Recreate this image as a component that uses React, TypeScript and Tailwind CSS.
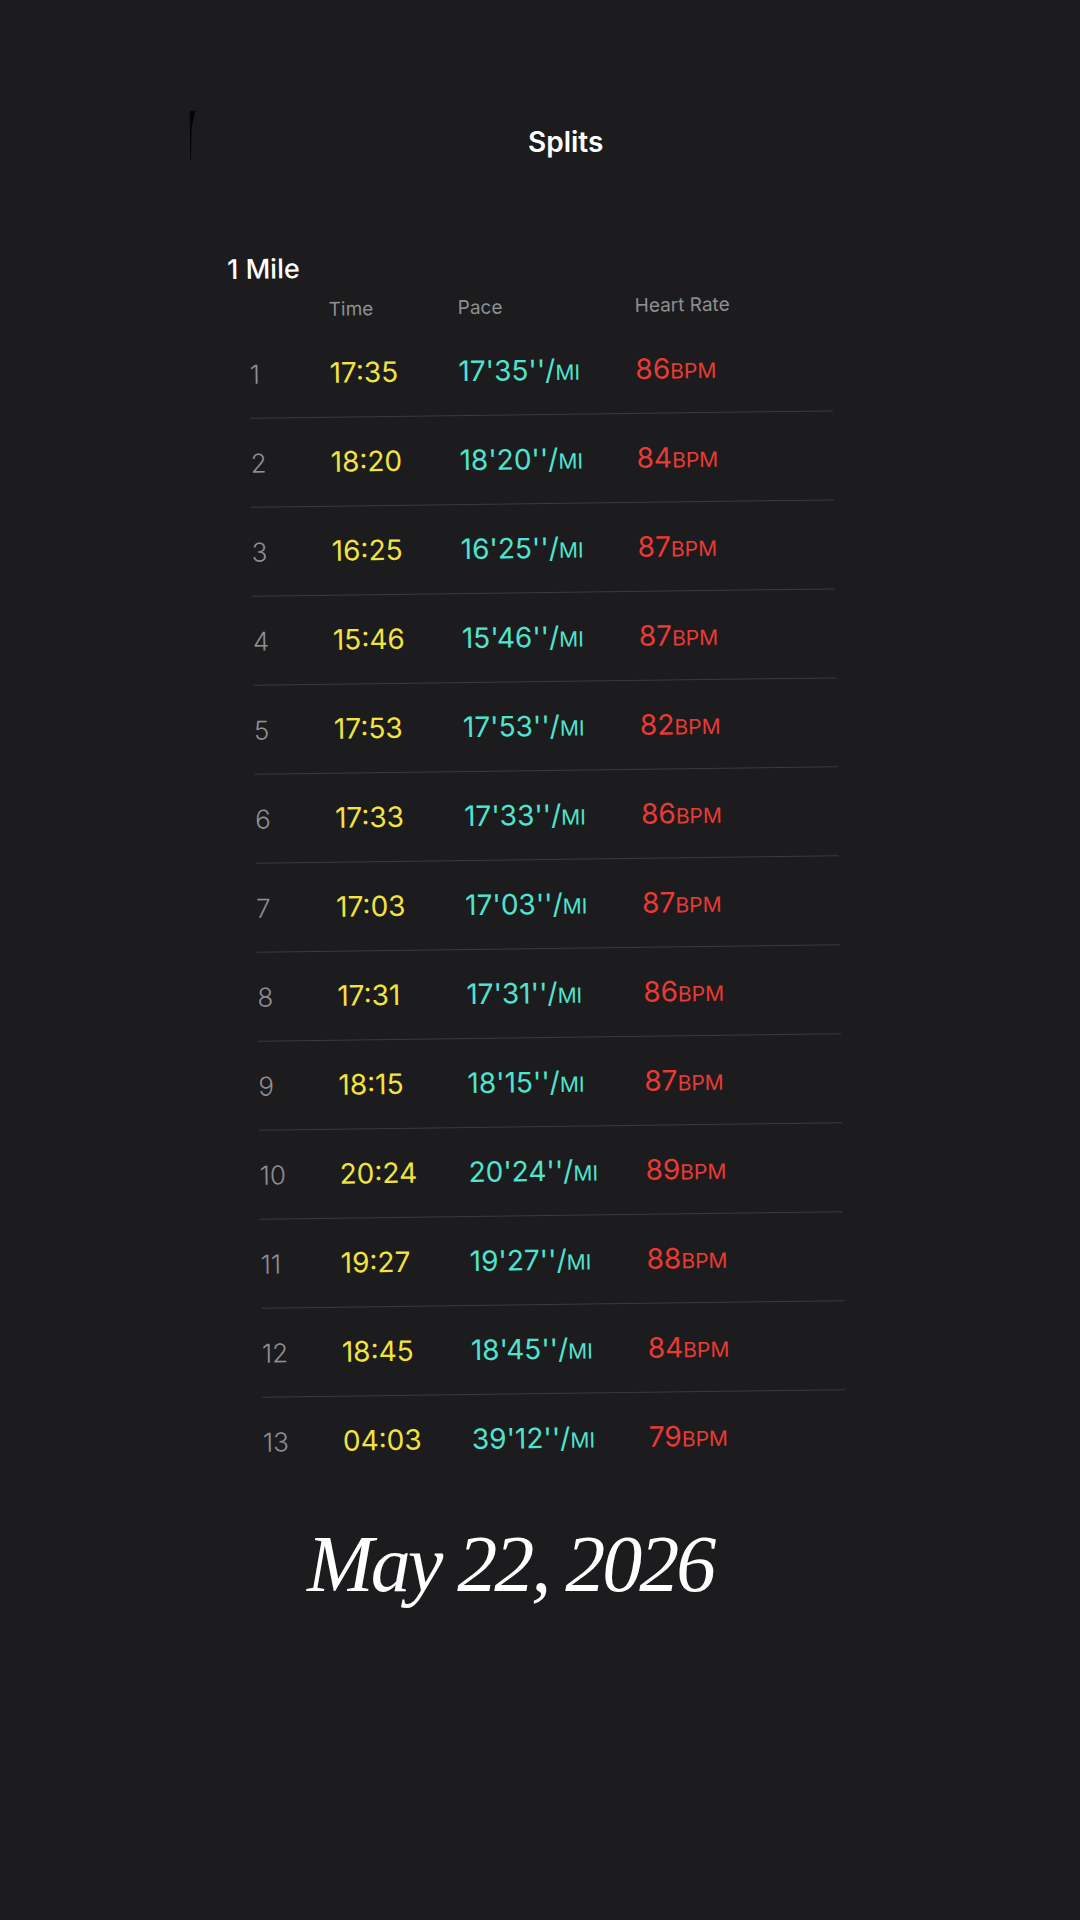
import React from 'react';

type Split = { n: number; time: string; pace: string; bpm: number };

const splits: Split[] = [
  { n: 1, time: '17:35', pace: "17'35''", bpm: 86 },
  { n: 2, time: '18:20', pace: "18'20''", bpm: 84 },
  { n: 3, time: '16:25', pace: "16'25''", bpm: 87 },
  { n: 4, time: '15:46', pace: "15'46''", bpm: 87 },
  { n: 5, time: '17:53', pace: "17'53''", bpm: 82 },
  { n: 6, time: '17:33', pace: "17'33''", bpm: 86 },
  { n: 7, time: '17:03', pace: "17'03''", bpm: 87 },
  { n: 8, time: '17:31', pace: "17'31''", bpm: 86 },
  { n: 9, time: '18:15', pace: "18'15''", bpm: 87 },
  { n: 10, time: '20:24', pace: "20'24''", bpm: 89 },
  { n: 11, time: '19:27', pace: "19'27''", bpm: 88 },
  { n: 12, time: '18:45', pace: "18'45''", bpm: 84 },
  { n: 13, time: '04:03', pace: "39'12''", bpm: 79 },
];

const cols = 'grid grid-cols-[80px_129px_177px_1fr] items-baseline';

const SplitRow: React.FC<{ split: Split; last: boolean }> = ({ split, last }) => (
  <div
    className={`${cols} h-[89px] pt-[27px] leading-[34px] border-b ${
      last ? 'border-transparent' : 'border-[#3b3b3e]'
    }`}
  >
    <span className="text-[26px] font-light text-[#8e8e93]">{split.n}</span>
    <span className="text-[28px] text-[#f3e33e]">{split.time}</span>
    <span className="text-[28px] text-[#50e3cf]">
      {split.pace}/<span className="text-[21px] leading-none">MI</span>
    </span>
    <span className="text-[28px] text-[#ea3a33]">
      {split.bpm}
      <span className="text-[21px] leading-none">BPM</span>
    </span>
  </div>
);

export default function App() {
  return (
    <div className="min-h-[1920px] w-full bg-[#1c1c1e] font-['Inter',sans-serif] text-white">
      {/* top bar */}
      <div className="flex items-start">
        <svg className="ml-[189px] mt-[110px]" width="8" height="50" viewBox="0 0 8 50">
          <path d="M0.6 2 Q2 0 6.5 1 L2.6 18 L2.1 50 L1.3 50 L0.9 18 Z" fill="#060606" />
        </svg>
        <h1 className="ml-[331px] mt-[125px] text-[28px] leading-[34px] font-semibold">Splits</h1>
      </div>

      {/* splits table */}
      <div className="ml-[227px] mt-[94px] w-[604px] origin-top-left -rotate-[0.72deg]">
        <h2 className="text-[27px] leading-[32px] font-medium">1 Mile</h2>
        <div className={`${cols} ml-[21px] mt-[14px] text-[19px] leading-[22px] text-[#8e8e93]`}>
          <span />
          <span>Time</span>
          <span>Pace</span>
          <span>Heart Rate</span>
        </div>
        <div className="ml-[21px] mt-[8px]">
          {splits.map((s, i) => (
            <SplitRow key={s.n} split={s} last={i === splits.length - 1} />
          ))}
        </div>
      </div>

      {/* date */}
      <p className="ml-[307px] mt-[37px] font-['Liberation_Serif',serif] text-[80px] leading-[80px] italic tracking-[-3px]">
        May 22, 2026
      </p>
    </div>
  );
}
